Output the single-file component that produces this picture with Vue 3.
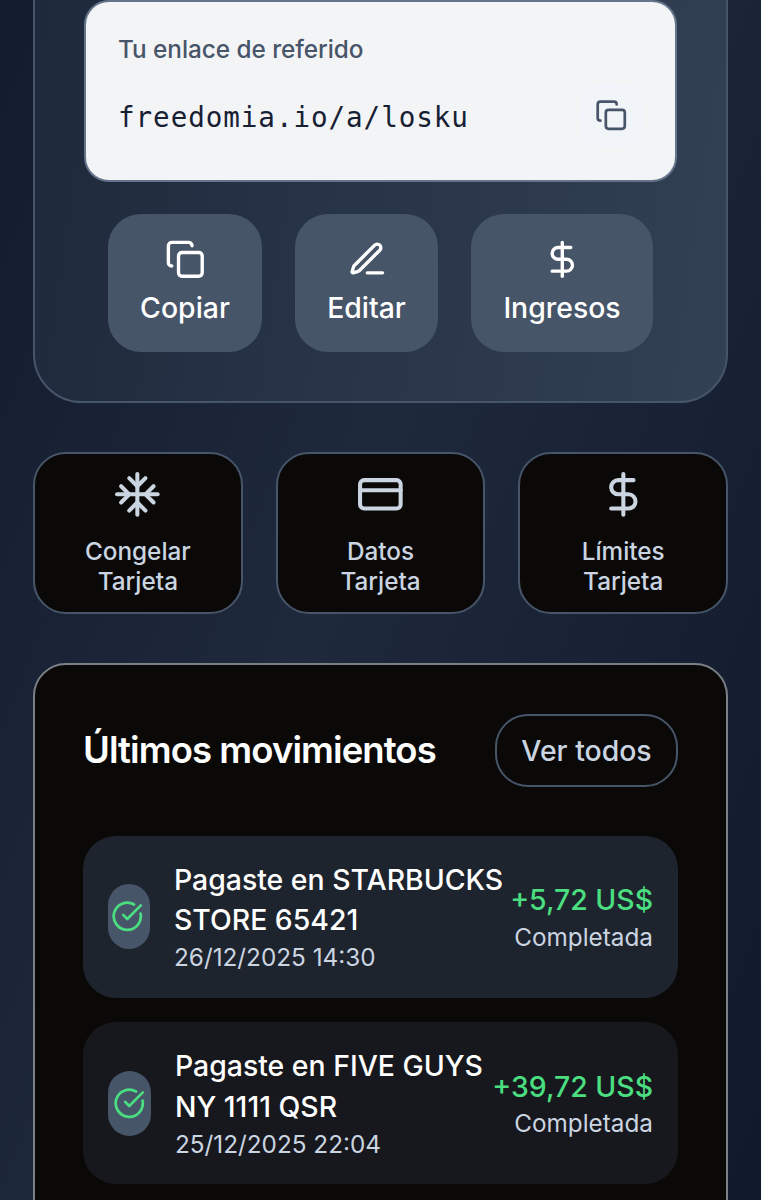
<script setup>
const actions = [
  { label: 'Copiar', icon: 'copy', cls: 'action-copy' },
  { label: 'Editar', icon: 'pen', cls: 'action-edit' },
  { label: 'Ingresos', icon: 'dollar', cls: 'action-income' },
]
const tiles = [
  { top: 'Congelar', icon: 'snow' },
  { top: 'Datos', icon: 'card' },
  { top: 'Límites', icon: 'dollar' },
]
const movements = [
  { l1: 'Pagaste en STARBUCKS', l2: 'STORE 65421', date: '26/12/2025 14:30', amount: '+5,72 US$', cls: 'first' },
  { l1: 'Pagaste en FIVE GUYS', l2: 'NY 1111 QSR', date: '25/12/2025 22:04', amount: '+39,72 US$', cls: 'second' },
]
const icons = {
  copy: ['M10 8H20A2 2 0 0 1 22 10V20A2 2 0 0 1 20 22H10A2 2 0 0 1 8 20V10A2 2 0 0 1 10 8Z', 'M4 16c-1.1 0-2-.9-2-2V4c0-1.1.9-2 2-2h10c1.1 0 2 .9 2 2'],
  pen: ['M12 20h9', 'M16.376 3.622a1 1 0 0 1 3.002 3.002L7.368 18.635a2 2 0 0 1-.855.506l-2.872.838a.5.5 0 0 1-.62-.62l.838-2.872a2 2 0 0 1 .506-.854z'],
  dollar: ['M12 2v20', 'M17 5H9.5a3.5 3.5 0 0 0 0 7h5a3.5 3.5 0 0 1 0 7H6'],
  snow: ['M2 12h20', 'M12 2v20', 'm20 16-4-4 4-4', 'm4 8 4 4-4 4', 'm16 4-4 4-4-4', 'm8 20 4-4 4 4'],
  card: ['M4 5H20A2 2 0 0 1 22 7V17A2 2 0 0 1 20 19H4A2 2 0 0 1 2 17V7A2 2 0 0 1 4 5Z', 'M2 10h20'],
  check: ['M21.801 10A10 10 0 1 1 17 3.335', 'm9 11 3 3L22 4'],
}
</script>

<template>
  <main class="screen">
    <section class="referral">
      <div class="link-box">
        <div class="link-label"><span>Tu enlace de referido</span></div>
        <div class="link-row">
          <span class="link-url">freedomia.io/a/losku</span>
          <button class="copy-btn" aria-label="Copiar">
            <svg class="icon" viewBox="0 0 24 24"><path v-for="d in icons.copy" :key="d" :d="d" /></svg>
          </button>
        </div>
      </div>
      <div class="actions">
        <button v-for="a in actions" :key="a.label" class="action" :class="a.cls">
          <svg class="icon" viewBox="0 0 24 24"><path v-for="d in icons[a.icon]" :key="d" :d="d" /></svg>
          <span>{{ a.label }}</span>
        </button>
      </div>
    </section>

    <section class="tiles">
      <button v-for="t in tiles" :key="t.top" class="tile">
        <svg class="icon" viewBox="0 0 24 24"><path v-for="d in icons[t.icon]" :key="d" :d="d" /></svg>
        <span>{{ t.top }}<br />Tarjeta</span>
      </button>
    </section>

    <section class="history">
      <header class="history-head">
        <h2>Últimos movimientos</h2>
        <button class="all-btn">Ver todos</button>
      </header>
      <article v-for="m in movements" :key="m.date" class="movement" :class="m.cls">
        <div class="badge">
          <svg class="icon" viewBox="0 0 24 24"><path v-for="d in icons.check" :key="d" :d="d" /></svg>
        </div>
        <div class="info">
          <div class="name">{{ m.l1 }}<br />{{ m.l2 }}</div>
          <div class="date">{{ m.date }}</div>
        </div>
        <div class="sum">
          <div class="amount">{{ m.amount }}</div>
          <div class="state">Completada</div>
        </div>
      </article>
    </section>
  </main>
</template>

<style>
body { margin: 0; background: #0f172a; }
</style>

<style scoped>
.screen {
  box-sizing: border-box;
  width: 761px;
  height: 1200px;
  padding: 0 33px;
  overflow: hidden;
  display: flex;
  flex-direction: column;
  font-family: Inter, "Liberation Sans", sans-serif;
  background: linear-gradient(to bottom right, #0f172a, #1e293b, #0f172a) 0 -570px / 761px 2000px no-repeat;
}
.screen * { box-sizing: border-box; }
button {
  margin: 0;
  padding: 0;
  border: 0;
  background: none;
  font: inherit;
  color: inherit;
}
.icon {
  display: block;
  flex: none;
  fill: none;
  stroke: currentColor;
  stroke-width: 2;
  stroke-linecap: round;
  stroke-linejoin: round;
}
.referral {
  flex: none;
  height: 453px;
  margin-top: -50px;
  padding: 48px 49px 49px;
  border: 2px solid #475569;
  border-radius: 49px;
  background: linear-gradient(98deg, #1e293b, #334155);
}
.link-box {
  height: 182px;
  padding: 31px 31px 0 32px;
  border: 2px solid #64748b;
  border-radius: 25px;
  background: #f3f4f6;
}
.link-label {
  font-size: 24.35px;
  line-height: 33px;
  font-weight: 500;
  letter-spacing: -0.05px;
  color: #475569;
}
.link-row {
  margin-top: 17px;
  height: 65px;
  display: flex;
  align-items: center;
  justify-content: space-between;
}
.link-url {
  padding-top: 3px;
  font-family: "DejaVu Sans Mono", "Liberation Mono", monospace;
  font-size: 27.6px;
  letter-spacing: 0.93px;
  color: #172033;
}
.copy-btn {
  width: 65px;
  height: 65px;
  border-radius: 24px;
  display: flex;
  align-items: center;
  justify-content: center;
  background: #f1f5f9;
  color: #475569;
}
.copy-btn .icon { width: 32.5px; height: 32.5px; }
.actions {
  margin-top: 32.4px;
  display: flex;
  justify-content: center;
  gap: 33px;
}
.action {
  height: 138px;
  padding-top: 24.4px;
  border-radius: 33px;
  display: flex;
  flex-direction: column;
  align-items: center;
  gap: 8.2px;
  background: #475569;
  color: #fff;
  font-size: 28.4px;
  line-height: 40.6px;
  font-weight: 500;
}
.action .icon { width: 40.6px; height: 40.6px; }
.action-copy { width: 154px; }
.action-edit { width: 143px; }
.action-edit .icon { margin-left: 2px; }
.action-income { width: 182px; }
.tiles {
  flex: none;
  margin-top: 49px;
  display: grid;
  grid-template-columns: repeat(3, 1fr);
  gap: 33px;
}
.tile {
  height: 162px;
  padding-top: 16px;
  border: 2px solid #475569;
  border-radius: 33px;
  display: flex;
  flex-direction: column;
  align-items: center;
  gap: 17px;
  background: #0a0907;
  color: #cbd5e1;
  font-size: 24.3px;
  line-height: 30.4px;
  font-weight: 500;
}
.tile .icon { width: 48.7px; height: 48.7px; }
.history {
  flex: none;
  height: 640px;
  margin-top: 49px;
  padding: 49px 48px;
  border: 2px solid #7b7f86;
  border-radius: 33px;
  background: #0a0907;
}
.history-head {
  height: 73px;
  display: flex;
  align-items: center;
  justify-content: space-between;
}
h2 {
  margin: 0;
  padding-bottom: 1px;
  font-size: 36.5px;
  font-weight: 600;
  letter-spacing: -0.92px;
  color: #fff;
  white-space: nowrap;
}
.all-btn {
  width: 183px;
  height: 73px;
  border: 2px solid #475569;
  border-radius: 33px;
  color: #cbd5e1;
  font-size: 28.4px;
  font-weight: 500;
}
.movement {
  height: 162.2px;
  margin-top: 24.4px;
  padding: 0 25px;
  border-radius: 33px;
  display: flex;
  align-items: center;
  background: #17181d;
}
.movement.first {
  margin-top: 48.6px;
  background: #1e242d;
}
.badge {
  width: 42px;
  height: 65px;
  border-radius: 24px;
  display: flex;
  align-items: center;
  justify-content: center;
  background: #475569;
  color: #4ade80;
}
.first .badge { padding-right: 3px; }
.second .badge { width: 43px; }
.badge .icon { width: 32.5px; height: 32.5px; }
.info { margin-left: 24px; flex: 1; }
.name, .amount {
  font-size: 28.4px;
  line-height: 40.6px;
  font-weight: 500;
  white-space: nowrap;
}
.name { color: #fff; }
.date, .state {
  font-size: 24.3px;
  line-height: 32.4px;
  color: #cbd5e1;
  white-space: nowrap;
}
.sum { text-align: right; }
.amount { color: #4ade80; }
</style>
